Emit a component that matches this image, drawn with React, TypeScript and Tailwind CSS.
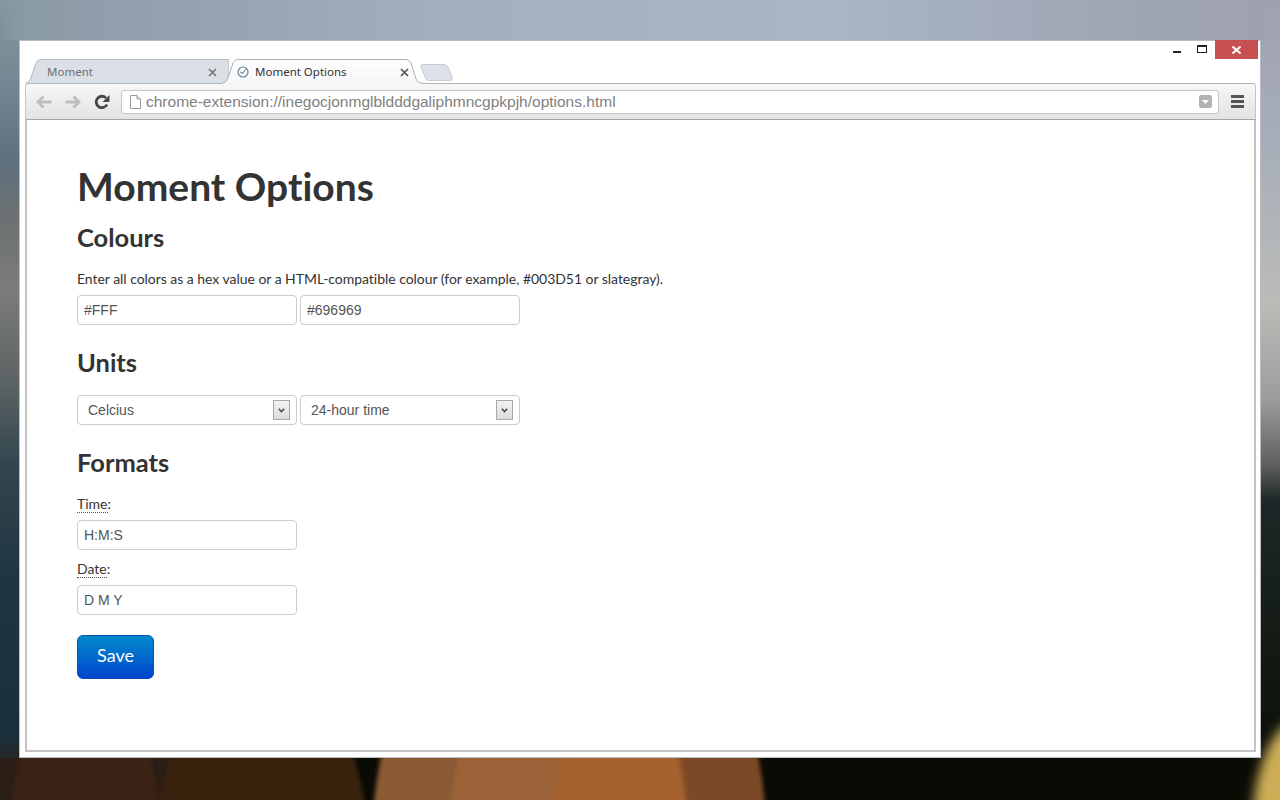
const lato = "font-['Lato',sans-serif] [font-variant-ligatures:none]";
const arial = "font-['Liberation_Sans',Arial,sans-serif]";
const tabFont = "font-['Noto_Sans',sans-serif]";

const inputClass = `block w-[220px] h-[30px] border border-[#ccc] rounded-[4px] bg-white px-[6px] text-[14px] text-[#555] outline-none ${arial}`;

// backdrop photo, only the margins around the window show
const Wallpaper = () => (
  <svg className="absolute inset-0" width="1280" height="800" viewBox="0 0 1280 800" aria-hidden="true">
    <defs>
      <linearGradient id="leftSide" x1="0" y1="0" x2="0" y2="1">
        <stop offset="0" stopColor="#87979f" />
        <stop offset="0.1" stopColor="#748792" />
        <stop offset="0.2" stopColor="#5f717e" />
        <stop offset="0.28" stopColor="#6d7172" />
        <stop offset="0.36" stopColor="#7b7d7a" />
        <stop offset="0.47" stopColor="#5f6566" />
        <stop offset="0.58" stopColor="#33464f" />
        <stop offset="0.72" stopColor="#1f3540" />
        <stop offset="0.92" stopColor="#19303a" />
        <stop offset="0.96" stopColor="#2b241f" />
        <stop offset="1" stopColor="#2a1c12" />
      </linearGradient>
      <linearGradient id="rightSide" x1="0" y1="0" x2="0" y2="1">
        <stop offset="0" stopColor="#9ea2af" />
        <stop offset="0.18" stopColor="#a7aeb9" />
        <stop offset="0.38" stopColor="#bbbbb8" />
        <stop offset="0.5" stopColor="#9c9c9b" />
        <stop offset="0.58" stopColor="#5f605f" />
        <stop offset="0.625" stopColor="#1e2828" />
        <stop offset="0.85" stopColor="#11170f" />
        <stop offset="1" stopColor="#0a0b05" />
      </linearGradient>
      <linearGradient id="topMid" x1="0" y1="0" x2="1" y2="0">
        <stop offset="0" stopColor="#8a9aa5" stopOpacity="0" />
        <stop offset="0.015" stopColor="#8a9aa5" />
        <stop offset="0.35" stopColor="#a3afc0" />
        <stop offset="0.65" stopColor="#a8b6c5" />
        <stop offset="0.88" stopColor="#9fa5b3" />
        <stop offset="0.985" stopColor="#9ea2af" />
        <stop offset="1" stopColor="#9ea2af" stopOpacity="0" />
      </linearGradient>
      <linearGradient id="fadeX" x1="0" y1="0" x2="1" y2="0">
        <stop offset="0.1" stopColor="#000" />
        <stop offset="0.9" stopColor="#fff" />
      </linearGradient>
      <mask id="rightMask">
        <rect width="1280" height="800" fill="url(#fadeX)" />
      </mask>
      <filter id="soft" x="-30%" y="-30%" width="160%" height="160%">
        <feGaussianBlur stdDeviation="2" />
      </filter>
      <filter id="softer" x="-50%" y="-50%" width="200%" height="200%">
        <feGaussianBlur stdDeviation="6" />
      </filter>
    </defs>
    <rect width="1280" height="800" fill="url(#leftSide)" />
    <rect width="1280" height="800" fill="url(#rightSide)" mask="url(#rightMask)" />
    <rect width="1280" height="40" fill="url(#topMid)" />
    <rect y="758" width="1280" height="42" fill="#0a0b05" />
    <rect y="758" x="0" width="180" height="42" fill="#2b1e16" />
    <g filter="url(#soft)">
      <ellipse cx="85" cy="900" rx="80" ry="250" fill="#3a2415" />
      <ellipse cx="262" cy="900" rx="112" ry="250" fill="#38200a" />
      <ellipse cx="440" cy="900" rx="72" ry="250" fill="#8a5a35" />
      <ellipse cx="705" cy="900" rx="65" ry="250" fill="#7c4a25" />
      <ellipse cx="520" cy="900" rx="75" ry="250" fill="#9c6338" />
      <ellipse cx="620" cy="900" rx="72" ry="250" fill="#a5622f" />
    </g>
    <ellipse cx="1300" cy="830" rx="48" ry="110" fill="#cdae56" filter="url(#softer)" />
  </svg>
);

const TabClose = ({ dark }: { dark?: boolean }) => (
  <svg width="9" height="9" viewBox="0 0 9 9" aria-hidden="true">
    <path d="M1 1l7 7M8 1l-7 7" stroke={dark ? "#555" : "#777"} strokeWidth="1.7" />
  </svg>
);

const Tabs = () => (
  <div className="flex items-start mt-[18px] ml-[5px]">
    <div className={`relative w-[204px] h-[24px] pt-[2px] flex items-center ${tabFont}`}>
      <svg className="absolute inset-0" width="204" height="24" viewBox="0 0 204 24" aria-hidden="true">
        <path d="M0 24.5Q4 24 5.5 20L11 4Q12.5 .5 16 .5H204V24.5Z" fill="#dbdfe6" stroke="#b4b8bf" />
      </svg>
      <span className="relative ml-[22px] w-[161px] text-[11.5px] text-[#6f6f78]">Moment</span>
      <span className="relative flex"><TabClose /></span>
    </div>
    <div className={`relative z-10 -ml-[7px] w-[200px] h-[25px] pt-[1px] flex items-center ${tabFont}`}>
      <svg className="absolute inset-0" width="200" height="25" viewBox="0 0 200 25" aria-hidden="true">
        <defs>
          <linearGradient id="activeTab" x1="0" y1="0" x2="0" y2="1">
            <stop offset="0" stopColor="#ffffff" />
            <stop offset="1" stopColor="#f6f6f6" />
          </linearGradient>
        </defs>
        <path d="M0 24Q4 24 5.5 20L11 4Q12.5 .5 16 .5H184Q187.5 .5 189 4L194 20Q195.5 24 200 24V25H0Z" fill="url(#activeTab)" />
        <path d="M0 24Q4 24 5.5 20L11 4Q12.5 .5 16 .5H184Q187.5 .5 189 4L194 20Q195.5 24 200 24" fill="none" stroke="#adb0b5" />
      </svg>
      <svg className="relative ml-[15px]" width="12" height="12" viewBox="0 0 12 12" aria-hidden="true">
        <circle cx="6" cy="6" r="5" fill="none" stroke="#5f8690" strokeWidth="1.2" />
        <path d="M8.5 3.5L5.5 7.5L3.5 6" fill="none" stroke="#5f8690" strokeWidth="1.1" />
      </svg>
      <span className="relative ml-[6px] w-[145px] text-[11.5px] text-[#333]">Moment Options</span>
      <span className="relative flex"><TabClose dark /></span>
    </div>
    <svg className="ml-[-2px] mt-[5px]" width="34" height="17" viewBox="0 0 34 17" aria-hidden="true">
      <path d="M2.5 .5H24Q27 .5 28 3L32 13Q33 16.5 30 16.5H9Q6 16.5 5 13L1 3Q.5 .5 2.5 .5Z" fill="#dde1e8" stroke="#c8ccd2" />
    </svg>
  </div>
);

const WindowControls = () => (
  <div className="flex items-start">
    <div className="w-[8px] h-[2px] mt-[10px] bg-[#222]" />
    <div className="w-[10px] h-[8px] mt-[4px] ml-[16px] border border-[#222] border-t-2" />
    <div className="w-[43px] h-[19px] -mt-px ml-[8px] mr-[2px] bg-[#c75050] flex items-center justify-center">
      <svg width="9" height="8" viewBox="0 0 9 8" aria-hidden="true">
        <path d="M.5 .5l8 7M8.5 .5l-8 7" stroke="#fff" strokeWidth="2" />
      </svg>
    </div>
  </div>
);

const Toolbar = () => (
  <div className="h-[36px] flex items-center bg-gradient-to-b from-[#f7f7f7] to-[#e3e3e3] border-x border-x-[#c4c4c4] border-b border-b-[#a5a5a5] rounded-t-[3px]">
    <svg className="ml-[10px]" width="16" height="14" viewBox="0 0 16 14" aria-hidden="true">
      <path d="M15.5 7H3M7.5 1.5L2 7l5.500 5.500" fill="none" stroke="#bfbfbf" strokeWidth="3" />
    </svg>
    <svg className="ml-[13px]" width="16" height="14" viewBox="0 0 16 14" aria-hidden="true">
      <path d="M.5 7H13M8.5 1.5L14 7l-5.500 5.500" fill="none" stroke="#bfbfbf" strokeWidth="3" />
    </svg>
    <svg className="ml-[13px]" width="16" height="16" viewBox="0 0 16 16" aria-hidden="true">
      <path d="M13 10.5A5.7 5.7 0 1 1 12 4" fill="none" stroke="#474747" strokeWidth="2.8" />
      <path d="M15.5 1v7h-7z" fill="#474747" />
    </svg>
    <div className="ml-[11px] w-[1098px] h-[24px] bg-white border border-[#c6c6c6] rounded-[3px] flex items-center">
      <svg className="ml-[8px]" width="11" height="14" viewBox="0 0 11 14" aria-hidden="true">
        <path d="M.5 .5H7L10.5 4V13.5H.5Z" fill="#fff" stroke="#9a9a9a" />
        <path d="M7 .5V4H10.5" fill="#e8e8e8" stroke="#9a9a9a" />
      </svg>
      <span className={`ml-[5px] text-[15.5px] text-[#808080] whitespace-nowrap ${arial}`}>
        chrome-extension://inegocjonmglbldddgaliphmncgpkpjh/options.html
      </span>
      <div className="ml-auto mr-[6px] w-[13px] h-[13px] rounded-[2px] bg-[#b2b2b2] flex items-center justify-center">
        <svg width="7" height="4" viewBox="0 0 7 4" aria-hidden="true">
          <path d="M0 0h7L3.5 4z" fill="#fff" />
        </svg>
      </div>
    </div>
    <div className="ml-[12px] flex flex-col gap-[2px]">
      <div className="w-[13px] h-[3px] bg-[#555]" />
      <div className="w-[13px] h-[3px] bg-[#555]" />
      <div className="w-[13px] h-[3px] bg-[#555]" />
    </div>
  </div>
);

const Select = ({ value }: { value: string }) => (
  <div className="relative w-[220px] h-[30px]">
    <select
      defaultValue={value}
      className={`appearance-none w-full h-full border border-[#ccc] rounded-[4px] bg-white pl-[10px] text-[14px] text-[#555] outline-none ${arial}`}
    >
      <option>{value}</option>
    </select>
    <div className="absolute right-[7px] top-[5px] w-[17px] h-[20px] border border-[#a8a8a8] bg-gradient-to-b from-[#f2f2f2] to-[#dcdcdc] flex items-center justify-center pointer-events-none">
      <svg width="7" height="5" viewBox="0 0 7 5" aria-hidden="true">
        <path d="M.8 .8L3.5 3.5L6.2 .8" fill="none" stroke="#4a4a4a" strokeWidth="1.6" />
      </svg>
    </div>
  </div>
);

const FieldLabel = ({ text }: { text: string }) => (
  <label className="block h-[20px] text-[14px] leading-[20px] text-[#333]">
    <span className="border-b border-dotted border-[#555]">{text}</span>:
  </label>
);

const heading = "text-[25.5px] leading-[30px] font-bold text-[#333]";

const App = () => {
  return (
    <div className="relative w-[1280px] h-[800px] overflow-hidden pt-[40px] pl-[19px]">
      <Wallpaper />
      <div className="relative w-[1242px] h-[718px] bg-white border border-[#b9bdc2] flex flex-col">
        <div className="h-[42px] flex justify-between items-start">
          <Tabs />
          <WindowControls />
        </div>
        <div className="ml-[5px] mr-[4px] w-[1231px] h-[669px] flex flex-col border-t border-[#b0b3b7] rounded-t-[3px]">
          <Toolbar />
          <main className={`flex-1 border-x-2 border-b-2 border-[#c4c4c4] pl-[50px] pt-[44px] bg-white ${lato}`}>
            <h1 className="text-[39px] leading-[44px] font-bold text-[#333]">Moment Options</h1>
            <h2 className={`mt-[14px] ${heading}`}>Colours</h2>
            <p className="mt-[17px] text-[14px] leading-[20px] tracking-[-0.035px] text-[#333]">
              Enter all colors as a hex value or a HTML-compatible colour (for example, #003D51 or slategray).
            </p>
            <div className="mt-[6px] flex gap-[3px]">
              <input className={inputClass} defaultValue="#FFF" />
              <input className={inputClass} defaultValue="#696969" />
            </div>
            <h2 className={`mt-[22px] ${heading}`}>Units</h2>
            <div className="mt-[18px] flex gap-[3px]">
              <Select value="Celcius" />
              <Select value="24-hour time" />
            </div>
            <h2 className={`mt-[22px] ${heading}`}>Formats</h2>
            <div className="mt-[17px]">
              <FieldLabel text="Time" />
              <input className={`mt-[6px] ${inputClass}`} defaultValue="H:M:S" />
            </div>
            <div className="mt-[9px]">
              <FieldLabel text="Date" />
              <input className={`mt-[6px] ${inputClass}`} defaultValue="D M Y" />
            </div>
            <button className="mt-[20px] block w-[77px] h-[44px] pb-[4px] rounded-[6px] border border-[#0a4fb5] bg-gradient-to-b from-[#0088cc] to-[#0044cc] text-[18px] text-white">
              Save
            </button>
          </main>
        </div>
      </div>
    </div>
  );
};

export default App;
